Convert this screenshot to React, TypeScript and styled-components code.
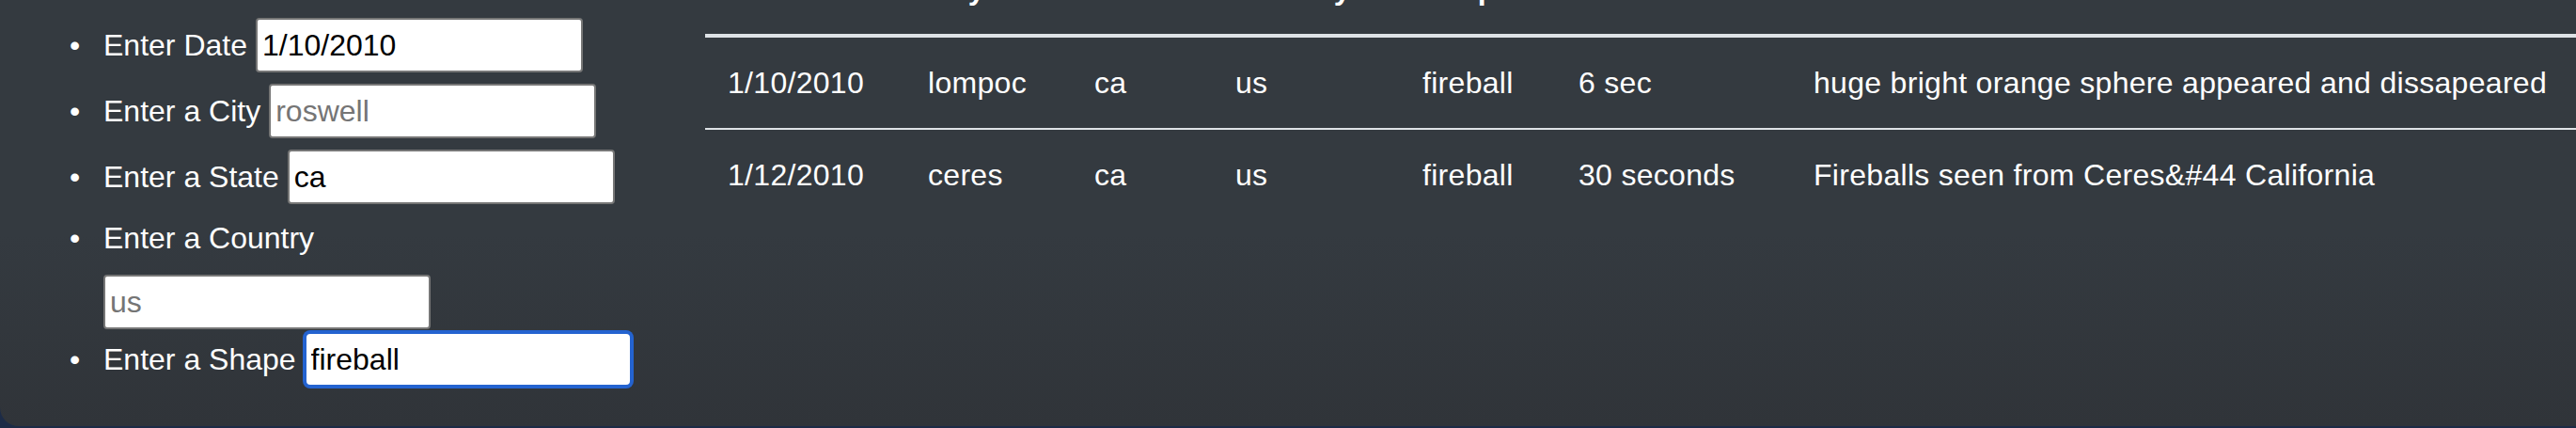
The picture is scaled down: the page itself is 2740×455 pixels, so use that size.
import React from "react";
import styled, { createGlobalStyle, css } from "styled-components";

const GlobalStyle = createGlobalStyle`
  html, body {
    margin: 0;
    padding: 0;
    background: #1c2b46;
    overflow: hidden;
  }
  body {
    font-family: "Liberation Sans", Arial, sans-serif;
  }
`;

const Card = styled.div`
  display: grid;
  grid-template-columns: 750px 1fr;
  height: 453px;
  background: linear-gradient(180deg, #343a40 0%, #343a40 55%, #303439 100%);
  border-bottom-left-radius: 20px;
  color: #fff;
  font-size: 32px;
  line-height: 48px;
  overflow: hidden;
`;

const FilterColumn = styled.div`
  padding: 19px 0 0 30px;
`;

const FilterList = styled.ul`
  margin: 0;
  padding: 0;
  list-style: none;
`;

const FilterItem = styled.li<{ $stacked?: boolean }>`
  display: grid;
  grid-template-columns: 80px auto;
  align-items: baseline;
  margin-bottom: ${(p) => (p.$stacked ? 3 : 12)}px;

  &::before {
    content: "•";
    padding-left: 44px;
  }
`;

const Field = styled.div<{ $stacked?: boolean }>`
  display: flex;
  flex-wrap: wrap;
  align-items: baseline;
  column-gap: 9px;
  ${(p) =>
    p.$stacked &&
    css`
      flex-direction: column;
      align-items: flex-start;
      row-gap: 15px;
    `}
`;

const Label = styled.span`
  white-space: nowrap;
`;

const TextInput = styled.input<{ $focused?: boolean }>`
  box-sizing: border-box;
  width: 348px;
  height: 58px;
  padding: 0 5px;
  border: 2px solid #767676;
  border-radius: 4px;
  background: #fff;
  color: #000;
  font: 32px "Liberation Sans", Arial, sans-serif;
  outline: none;

  &::placeholder {
    color: #757575;
  }

  ${(p) =>
    p.$focused &&
    css`
      border-color: #2463d0;
      border-radius: 6px;
      box-shadow: 0 0 0 2px #2463d0;
    `}
`;

const TableColumn = styled.div`
  min-width: 0;
`;

const DataTable = styled.table`
  width: 100%;
  margin-top: -60px;
  border-collapse: collapse;
  table-layout: fixed;
  color: #fff;
`;

const Col = styled.col<{ $w: number }>`
  width: ${(p) => p.$w}px;
`;

const HeadCell = styled.th`
  padding: 24px;
  text-align: left;
  font-weight: 700;
  vertical-align: bottom;
  white-space: nowrap;
  border-bottom: 4px solid #dee2e6;
`;

const Cell = styled.td`
  padding: 24px;
  vertical-align: top;
  white-space: nowrap;
  letter-spacing: 0.3px;
  border-top: 2px solid #dee2e6;
`;

type Filter = {
  label: string;
  value?: string;
  placeholder?: string;
  stacked?: boolean;
  focused?: boolean;
};

const filters: Filter[] = [
  { label: "Enter Date", value: "1/10/2010" },
  { label: "Enter a City", placeholder: "roswell" },
  { label: "Enter a State", value: "ca" },
  { label: "Enter a Country", placeholder: "us", stacked: true },
  { label: "Enter a Shape", value: "fireball", focused: true },
];

const columns = [
  { name: "Date", width: 213 },
  { name: "City", width: 177 },
  { name: "State", width: 150 },
  { name: "Country", width: 199 },
  { name: "Shape", width: 166 },
  { name: "Duration", width: 250 },
  { name: "Comments", width: 835 },
];

const rows: string[][] = [
  [
    "1/10/2010",
    "lompoc",
    "ca",
    "us",
    "fireball",
    "6 sec",
    "huge bright orange sphere appeared and dissapeared",
  ],
  [
    "1/12/2010",
    "ceres",
    "ca",
    "us",
    "fireball",
    "30 seconds",
    "Fireballs seen from Ceres&#44 California",
  ],
];

export default function App() {
  return (
    <>
      <GlobalStyle />
      <Card>
        <FilterColumn>
          <FilterList>
            {filters.map((f) => (
              <FilterItem key={f.label} $stacked={f.stacked}>
                <Field $stacked={f.stacked}>
                  <Label>{f.label}</Label>
                  <TextInput
                    type="text"
                    defaultValue={f.value}
                    placeholder={f.placeholder}
                    $focused={f.focused}
                  />
                </Field>
              </FilterItem>
            ))}
          </FilterList>
        </FilterColumn>
        <TableColumn>
          <DataTable>
            <colgroup>
              {columns.map((c) => (
                <Col key={c.name} $w={c.width} />
              ))}
            </colgroup>
            <thead>
              <tr>
                {columns.map((c) => (
                  <HeadCell key={c.name}>{c.name}</HeadCell>
                ))}
              </tr>
            </thead>
            <tbody>
              {rows.map((r, i) => (
                <tr key={i}>
                  {r.map((v, j) => (
                    <Cell key={j}>{v}</Cell>
                  ))}
                </tr>
              ))}
            </tbody>
          </DataTable>
        </TableColumn>
      </Card>
    </>
  );
}
